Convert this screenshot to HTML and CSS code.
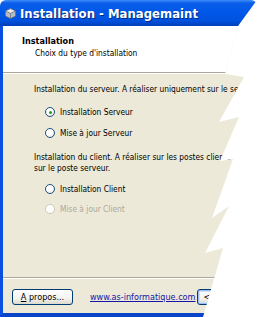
FILE: index.html
```html
<!DOCTYPE html>
<html lang="fr">
<head>
  <meta charset="UTF-8">
  <meta name="viewport" content="width=device-width, initial-scale=1.0">
  <title>Installation - Managemaint</title>
  <link rel="stylesheet" href="styles.css">
</head>
<body>
  <div class="window">
    <div class="titlebar">
      <svg class="app-icon" width="11" height="11" viewBox="0 0 11 11">
        <path d="M5.5 0.5 L10.5 3 L10.5 8 L5.5 10.5 L0.5 8 L0.5 3 Z" fill="#b9bcc4" stroke="#6d7382" stroke-width="0.8"/>
        <path d="M0.5 3 L5.5 5.5 L10.5 3 M5.5 5.5 L5.5 10.5" fill="none" stroke="#6d7382" stroke-width="0.8"/>
        <path d="M5.5 1.2 L9.4 3 L5.5 4.8 L1.6 3 Z" fill="#e9ebef"/>
      </svg>
      <span class="title">Installation - Managemaint</span>
    </div>

    <div class="frame">
      <div class="header">
        <div class="header-title">Installation</div>
        <div class="header-sub">Choix du type d'installation</div>
      </div>

      <div class="content">
        <p class="group-text">Installation du serveur. A réaliser uniquement sur le serveur.</p>
        <div class="options">
          <label class="radio"><span class="dot checked"></span>Installation Serveur</label>
          <label class="radio"><span class="dot"></span>Mise à jour Serveur</label>
        </div>

        <p class="group-text">Installation du client. A réaliser sur les postes clients ou<br>sur le poste serveur.</p>
        <div class="options options-client">
          <label class="radio"><span class="dot"></span>Installation Client</label>
          <label class="radio disabled"><span class="dot"></span>Mise à jour Client</label>
        </div>
      </div>

      <div class="footer">
        <button class="btn"><u>A</u> propos...</button>
        <a class="site-link" href="#">www.as-informatique.com</a>
        <button class="btn focused">&lt; Précédent</button>
      </div>
    </div>
  </div>
</body>
</html>
```

FILE: styles.css
```css
/* Global Styles */
body {
  margin: 0;
  padding: 0;
  background-color: #ffffff;
  font-family: "DejaVu Sans Condensed", "DejaVu Sans", sans-serif;
  font-size: 8.3px;
  color: #000000;
}

/* Torn window */
.window {
  width: 257px;
  height: 317px;
  display: flex;
  flex-direction: column;
  overflow: hidden;
  clip-path: polygon(0 0, 257px 0, 238px 26px, 225px 74px, 244px 77px, 219px 122px, 239px 117px, 220px 161px, 233px 159px, 212px 218px, 229px 206px, 205px 253px, 223px 248px, 203px 317px, 0 317px);
}

/* Title bar */
.titlebar {
  height: 26px;
  flex-shrink: 0;
  display: flex;
  align-items: center;
  gap: 4px;
  padding-left: 5px;
  border-radius: 6px 6px 0 0;
  background: linear-gradient(to bottom, #3d8dfa 0%, #0a5ee9 12%, #0058e8 45%, #0051de 80%, #0040b8 100%);
}

.app-icon {
  flex-shrink: 0;
}

.title {
  color: #ffffff;
  font-weight: bold;
  font-size: 13px;
  white-space: nowrap;
  text-shadow: 1px 1px 0 #0a2a80;
}

/* Frame */
.frame {
  flex: 1;
  display: flex;
  flex-direction: column;
  border-left: 3px solid #0a4fe0;
  border-bottom: 4px solid #0a45c8;
  background-color: #ece9d8;
}

.header {
  height: 47px;
  flex-shrink: 0;
  box-sizing: border-box;
  padding: 9px 0 0 19px;
  background-color: #ffffff;
  border-bottom: 1px solid #aca899;
  line-height: 12px;
}

.header-title {
  font-weight: bold;
  font-size: 9px;
}

.header-sub {
  padding-left: 13px;
}

.content {
  flex: 1;
  padding: 10px 0 0 31px;
  border-top: 1px solid #ffffff;
}

.group-text {
  margin: 0;
  line-height: 11px;
  white-space: nowrap;
}

.options {
  display: flex;
  flex-direction: column;
  gap: 11px;
  padding: 12px 0 14px 11px;
}

.options-client {
  padding-top: 10px;
  gap: 10px;
}

.radio {
  display: flex;
  align-items: center;
  gap: 5px;
  height: 10px;
  white-space: nowrap;
}

.dot {
  width: 10px;
  height: 10px;
  box-sizing: border-box;
  border-radius: 50%;
  border: 1px solid #1c5180;
  background: radial-gradient(circle at 35% 35%, #ffffff 40%, #dcdad0 100%);
  position: relative;
}

.dot.checked::after {
  content: "";
  position: absolute;
  left: 2.5px;
  top: 2.5px;
  width: 3px;
  height: 3px;
  border-radius: 50%;
  background-color: #21a121;
}

.radio.disabled {
  color: #aca899;
}

.radio.disabled .dot {
  border-color: #cac8bb;
  background: #ffffff;
}

/* Footer */
.footer {
  height: 36px;
  flex-shrink: 0;
  box-sizing: border-box;
  display: flex;
  align-items: flex-start;
  padding: 11px 0 0 9px;
  border-top: 1px solid #aca899;
  box-shadow: inset 0 1px 0 #ffffff;
  font-size: 9px;
}

.btn {
  height: 16px;
  width: 61px;
  flex-shrink: 0;
  padding: 0;
  font-family: inherit;
  font-size: 9px;
  color: #000000;
  border: 1px solid #003c74;
  border-radius: 3px;
  background: linear-gradient(to bottom, #ffffff 0%, #f4f3ee 60%, #dcd9cc 100%);
}

.btn.focused {
  width: 61px;
  text-align: left;
  padding-left: 5px;
  box-shadow: inset 0 0 0 1px #9fbef0, inset 0 0 0 2px #cedff8;
}

.site-link {
  margin: 0 2px 0 17px;
  line-height: 16px;
  color: #1515a8;
  white-space: nowrap;
}
```
